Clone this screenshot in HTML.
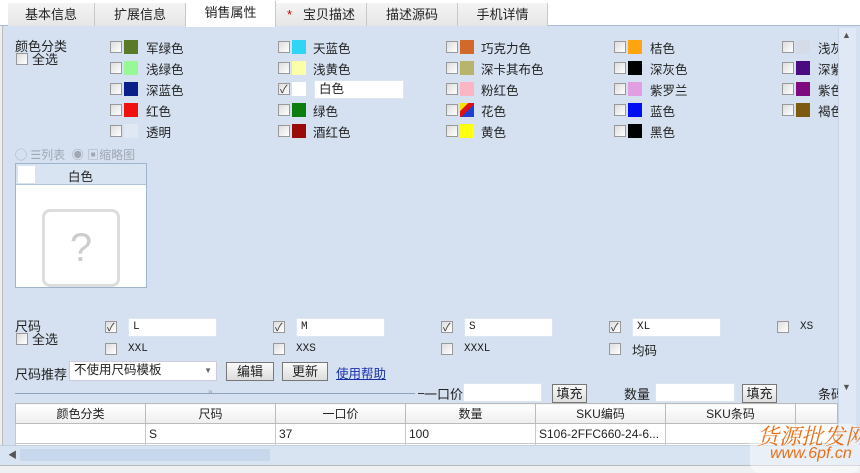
<!DOCTYPE html>
<html><head><meta charset="utf-8"><style>
*{box-sizing:border-box;margin:0;padding:0}
body{width:860px;height:473px;overflow:hidden;background:#d5e1f1;font-family:"Liberation Sans","Noto Sans CJK SC",sans-serif;font-size:12px;color:#222;position:relative}
.a{position:absolute;white-space:nowrap}
.tabs{left:0;top:0;width:860px;height:26px;background:#fff;border-bottom:1px solid #a9bcd3}
.tab{position:absolute;top:3px;height:23px;background:linear-gradient(#f4f4f4,#e6e6e6);border-right:1px solid #c8c8c8;text-align:center;line-height:23px;font-size:13px}
.cb{position:absolute;width:12px;height:12px;border:1px solid #999;background:linear-gradient(135deg,#ddd,#fff);}
.sw{position:absolute;width:14px;height:14px}
.lb{position:absolute;font-size:12.5px;white-space:nowrap;margin-top:-2px}
.inp{position:absolute;height:19px;background:#fff;border:1px solid #dde6f0;font-family:"Liberation Mono",monospace;font-size:11px;padding-left:4px;line-height:17px;white-space:nowrap}
.btn{position:absolute;height:19px;border:1px solid #777;background:linear-gradient(#fafafa,#ddd);text-align:center;line-height:17px;font-size:13px}
.chk::after{content:"✓";position:absolute;left:1px;top:-3px;font-size:11px;color:#333}
table{position:absolute;border-collapse:collapse;background:#fff}
td{border:1px solid #c9c9c9;height:20px;font-size:12px;padding-left:3px}
th{border:1px solid #bbb;height:20px;font-weight:normal;background:linear-gradient(#fff,#eee);font-size:12px}
</style></head><body>
<div class="a tabs"></div>
<div class="tab" style="left:8px;width:87px">基本信息</div>
<div class="tab" style="left:95px;width:91px">扩展信息</div>
<div class="tab" style="left:186px;width:90px;background:#fff;top:1px;height:26px">销售属性</div>
<div class="tab" style="left:276px;width:91px"><span style="color:#c00">*</span>&nbsp;&nbsp;&nbsp;宝贝描述</div>
<div class="tab" style="left:367px;width:91px">描述源码</div>
<div class="tab" style="left:458px;width:90px">手机详情</div>
<div class="a" style="left:0;top:26px;width:3px;height:447px;background:#eee;border-right:1px solid #bbb"></div>
<div class="a" style="left:838px;top:28px;width:18px;height:417px;background:#dfe8f4;border-left:1px solid #c5d3e6"></div>
<div class="a" style="left:842px;top:30px;font-size:9px;color:#555">▲</div>
<div class="a" style="left:842px;top:382px;font-size:9px;color:#555">▼</div>
<div class="a" style="left:15px;top:36px;font-size:13px">颜色分类</div>
<div class="cb" style="left:16px;top:53px"></div><div class="lb" style="left:32px;top:51px;font-size:13px">全选</div>

<div class="cb" style="left:110px;top:41px"></div><div class="sw" style="left:124px;top:40px;background:#5a7a2a"></div><div class="lb" style="left:146px;top:40px">军绿色</div>
<div class="cb" style="left:110px;top:62px"></div><div class="sw" style="left:124px;top:61px;background:#98f898"></div><div class="lb" style="left:146px;top:61px">浅绿色</div>
<div class="cb" style="left:110px;top:83px"></div><div class="sw" style="left:124px;top:82px;background:#0a1f8a"></div><div class="lb" style="left:146px;top:82px">深蓝色</div>
<div class="cb" style="left:110px;top:104px"></div><div class="sw" style="left:124px;top:103px;background:#f01010"></div><div class="lb" style="left:146px;top:103px">红色</div>
<div class="cb" style="left:110px;top:125px"></div><div class="sw" style="left:124px;top:124px;background:#e0e8f4"></div><div class="lb" style="left:146px;top:124px">透明</div>

<div class="cb" style="left:278px;top:41px"></div><div class="sw" style="left:292px;top:40px;background:#2fd6f4"></div><div class="lb" style="left:313px;top:40px">天蓝色</div>
<div class="cb" style="left:278px;top:62px"></div><div class="sw" style="left:292px;top:61px;background:#fbffa8"></div><div class="lb" style="left:313px;top:61px">浅黄色</div>
<div class="cb chk" style="left:278px;top:83px"></div><div class="sw" style="left:292px;top:82px;background:#fff"></div><div class="inp" style="left:314px;top:80px;width:90px;font-family:'Liberation Sans','Noto Sans CJK SC',sans-serif;font-size:12.5px">白色</div>
<div class="cb" style="left:278px;top:104px"></div><div class="sw" style="left:292px;top:103px;background:#0d7d10"></div><div class="lb" style="left:313px;top:103px">绿色</div>
<div class="cb" style="left:278px;top:125px"></div><div class="sw" style="left:292px;top:124px;background:#9a0a0a"></div><div class="lb" style="left:313px;top:124px">酒红色</div>

<div class="cb" style="left:446px;top:41px"></div><div class="sw" style="left:460px;top:40px;background:#d2692a"></div><div class="lb" style="left:481px;top:40px">巧克力色</div>
<div class="cb" style="left:446px;top:62px"></div><div class="sw" style="left:460px;top:61px;background:#b9b46c"></div><div class="lb" style="left:481px;top:61px">深卡其布色</div>
<div class="cb" style="left:446px;top:83px"></div><div class="sw" style="left:460px;top:82px;background:#fbb6c6"></div><div class="lb" style="left:481px;top:82px">粉红色</div>
<div class="cb" style="left:446px;top:104px"></div><div class="sw" style="left:460px;top:103px;background:linear-gradient(135deg,#f5e000 30%,#e01010 30%,#e01010 55%,#2040d0 55%)"></div><div class="lb" style="left:481px;top:103px">花色</div>
<div class="cb" style="left:446px;top:125px"></div><div class="sw" style="left:460px;top:124px;background:#ffff10"></div><div class="lb" style="left:481px;top:124px">黄色</div>

<div class="cb" style="left:614px;top:41px"></div><div class="sw" style="left:628px;top:40px;background:#ffa510"></div><div class="lb" style="left:650px;top:40px">桔色</div>
<div class="cb" style="left:614px;top:62px"></div><div class="sw" style="left:628px;top:61px;background:#000"></div><div class="lb" style="left:650px;top:61px">深灰色</div>
<div class="cb" style="left:614px;top:83px"></div><div class="sw" style="left:628px;top:82px;background:#e19ee0"></div><div class="lb" style="left:650px;top:82px">紫罗兰</div>
<div class="cb" style="left:614px;top:104px"></div><div class="sw" style="left:628px;top:103px;background:#0010f0"></div><div class="lb" style="left:650px;top:103px">蓝色</div>
<div class="cb" style="left:614px;top:125px"></div><div class="sw" style="left:628px;top:124px;background:#000"></div><div class="lb" style="left:650px;top:124px">黑色</div>

<div class="cb" style="left:782px;top:41px"></div><div class="sw" style="left:796px;top:40px;background:#d5dce8"></div><div class="lb" style="left:818px;top:40px;width:20px;overflow:hidden">浅灰色</div>
<div class="cb" style="left:782px;top:62px"></div><div class="sw" style="left:796px;top:61px;background:#4a0a80"></div><div class="lb" style="left:818px;top:61px;width:20px;overflow:hidden">深紫色</div>
<div class="cb" style="left:782px;top:83px"></div><div class="sw" style="left:796px;top:82px;background:#7e0a7e"></div><div class="lb" style="left:818px;top:82px;width:20px;overflow:hidden">紫色</div>
<div class="cb" style="left:782px;top:104px"></div><div class="sw" style="left:796px;top:103px;background:#7e5a10"></div><div class="lb" style="left:818px;top:103px;width:20px;overflow:hidden">褐色</div>

<div class="a" style="left:15px;top:146px;color:#a0a8b4;font-size:12px">◯ ☰列表 &nbsp;◉ ▣缩略图</div>
<div class="a" style="left:15px;top:163px;width:132px;height:125px;background:#fff;border:1px solid #9fb3cc"></div>
<div class="a" style="left:16px;top:164px;width:130px;height:21px;background:#d9e4f2;border-bottom:1px solid #b4c4d8"></div>
<div class="a" style="left:18px;top:166px;width:17px;height:17px;background:#fff"></div>
<div class="a" style="left:68px;top:166px;font-size:12.5px">白色</div>
<div class="a" style="left:42px;top:209px;width:78px;height:78px;border:3px solid #ddd;border-radius:8px;text-align:center;line-height:72px;font-size:40px;color:#ccc">?</div>

<div class="a" style="left:15px;top:316px;font-size:13px">尺码</div>
<div class="cb" style="left:16px;top:333px"></div><div class="lb" style="left:32px;top:331px;font-size:13px">全选</div>
<div class="cb chk" style="left:105px;top:321px"></div><div class="inp" style="left:128px;top:318px;width:89px">L</div>
<div class="cb chk" style="left:273px;top:321px"></div><div class="inp" style="left:296px;top:318px;width:89px">M</div>
<div class="cb chk" style="left:441px;top:321px"></div><div class="inp" style="left:464px;top:318px;width:89px">S</div>
<div class="cb chk" style="left:609px;top:321px"></div><div class="inp" style="left:632px;top:318px;width:89px">XL</div>
<div class="cb" style="left:777px;top:321px"></div><div class="a" style="left:800px;top:321px;font-family:'Liberation Mono',monospace;font-size:11px">XS</div>
<div class="cb" style="left:105px;top:343px"></div><div class="a" style="left:128px;top:343px;font-family:'Liberation Mono',monospace;font-size:11px">XXL</div>
<div class="cb" style="left:273px;top:343px"></div><div class="a" style="left:296px;top:343px;font-family:'Liberation Mono',monospace;font-size:11px">XXS</div>
<div class="cb" style="left:441px;top:343px"></div><div class="a" style="left:464px;top:343px;font-family:'Liberation Mono',monospace;font-size:11px">XXXL</div>
<div class="cb" style="left:609px;top:343px"></div><div class="lb" style="left:632px;top:342px">均码</div>

<div class="a" style="left:15px;top:364px;font-size:13px">尺码推荐</div>
<div class="inp" style="left:69px;top:361px;width:148px;height:20px;font-family:'Liberation Sans','Noto Sans CJK SC',sans-serif;font-size:12.5px;border-color:#ccd">不使用尺码模板<span style="position:absolute;right:4px;top:0;font-size:8px;color:#666">▼</span></div>
<div class="btn" style="left:226px;top:362px;width:48px">编辑</div>
<div class="btn" style="left:282px;top:362px;width:46px">更新</div>
<div class="a" style="left:336px;top:363px;color:#1a2fa8;text-decoration:underline;font-size:12.5px">使用帮助</div>

<div class="a" style="left:15px;top:393px;width:400px;height:1px;background:#8fa3bc"></div>
<div class="a" style="left:208px;top:387px;font-size:8px;color:#999">»</div>
<div class="a" style="left:418px;top:393px;width:6px;height:1px;background:#333"></div>
<div class="a" style="left:424px;top:384px;font-size:13px">一口价</div>
<div class="inp" style="left:463px;top:383px;width:79px"></div>
<div class="btn" style="left:552px;top:384px;width:35px">填充</div>
<div class="a" style="left:624px;top:384px;font-size:13px">数量</div>
<div class="inp" style="left:655px;top:383px;width:80px"></div>
<div class="btn" style="left:742px;top:384px;width:35px">填充</div>
<div class="a" style="left:818px;top:384px;font-size:13px;width:20px;overflow:hidden">条码</div>

<div class="a" style="left:15px;top:403px;width:823px;height:42px;overflow:hidden">
<table style="left:0;top:0;width:823px">
<tr><th style="width:130px">颜色分类</th><th style="width:130px">尺码</th><th style="width:130px">一口价</th><th style="width:130px">数量</th><th style="width:130px">SKU编码</th><th style="width:130px">SKU条码</th><th></th></tr>
<tr><td></td><td>S</td><td>37</td><td>100</td><td>S106-2FFC660-24-6...</td><td></td><td></td></tr>
<tr><td></td><td>M</td><td>37</td><td>100</td><td>S106-2FFC660-24-6...</td><td></td><td></td></tr>
</table></div>
<div class="a" style="left:0;top:445px;width:838px;height:20px;background:#d9e4f2;border-top:1px solid #c0cfe2"></div>
<div class="a" style="left:20px;top:449px;width:250px;height:12px;background:#c8d8ec"></div>
<div class="a" style="left:8px;top:448px;font-size:9px;color:#555">◀</div>
<div class="a" style="left:0;top:465px;width:860px;height:8px;background:#eef0f2;border-top:1px solid #bbb"></div>
<div class="a" style="left:750px;top:424px;width:110px;height:49px;background:rgba(255,255,255,0.45);border-radius:10px"></div>
<div class="a" style="left:757px;top:420px;color:#e8701a;font-size:22px;font-family:'Liberation Serif','Noto Serif CJK SC',serif;font-style:italic">货源批发网</div>
<div class="a" style="left:770px;top:445px;color:#e8701a;font-size:16px;font-style:italic">www.6pf.cn</div>
</body></html>
